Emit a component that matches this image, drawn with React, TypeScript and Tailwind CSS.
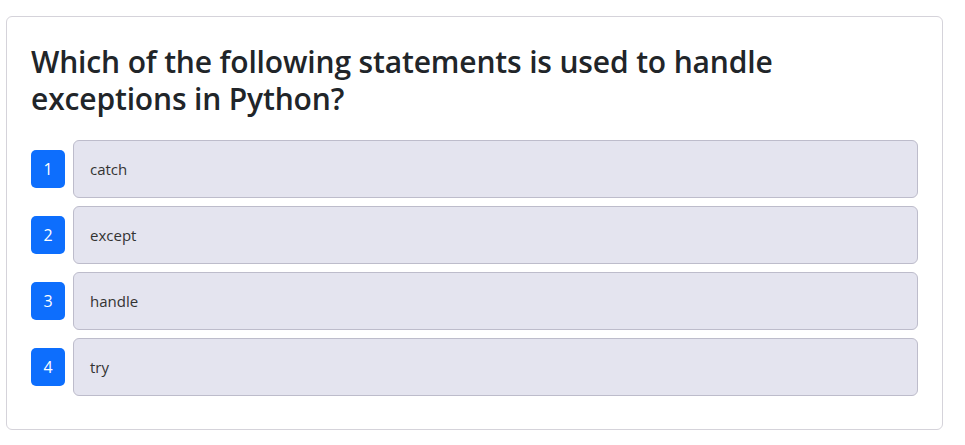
import React from 'react';

const options = ['catch', 'except', 'handle', 'try'];

export default function App() {
  return (
    <div className="min-h-[445px] bg-white pt-4 pl-[6px] font-['Open_Sans',sans-serif] text-[#212529]">
      <div className="w-[937px] h-[414px] rounded-md border border-[#d5d3da] p-6">
        {/* Question */}
        <h2 className="text-[30px] leading-[37px] font-semibold tracking-[-0.15px] mt-[2px] mb-[23px] pr-[140px]">
          Which of the following statements is used to handle exceptions in Python?
        </h2>

        {/* Answers */}
        <div className="flex flex-col gap-2">
          {options.map((opt, i) => (
            <div key={opt} className="flex items-center gap-2">
              <div className="w-[34px] h-[38px] rounded-[5px] bg-[#0d6efd] text-white text-[16px] flex items-center justify-center">
                {i + 1}
              </div>
              <div className="flex-1 h-[58px] rounded-md border border-[#bdbccb] bg-[#e4e4ef] px-4 flex items-center text-[15px] text-[#333]">
                {opt}
              </div>
            </div>
          ))}
        </div>
      </div>
    </div>
  );
}
